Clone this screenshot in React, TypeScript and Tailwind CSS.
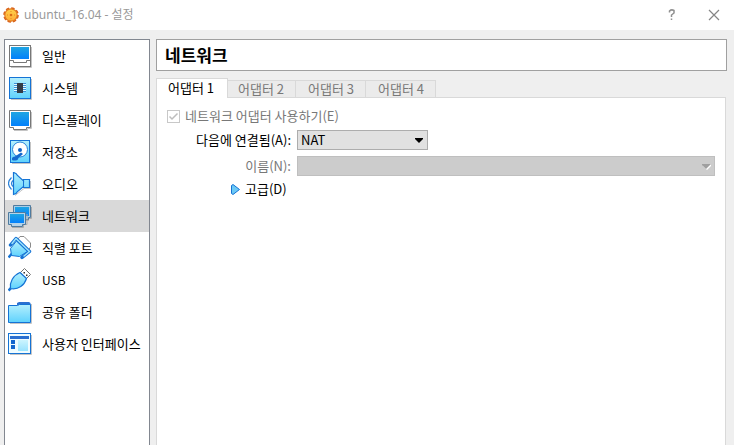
import React from "react";

const iconClass = "h-6 w-6 shrink-0";

function Gradients() {
  return (
    <svg className="absolute h-0 w-0" aria-hidden="true">
      <defs>
        <linearGradient id="screen" x1="0" y1="0" x2="0" y2="1">
          <stop offset="0" stopColor="#1fa5e2" />
          <stop offset="1" stopColor="#0380fb" />
        </linearGradient>
        <linearGradient id="sky" x1="0" y1="0" x2="0" y2="1">
          <stop offset="0" stopColor="#b4effd" />
          <stop offset="1" stopColor="#5fd2fd" />
        </linearGradient>
        <linearGradient id="gear" x1="0" y1="0" x2="0" y2="1">
          <stop offset="0" stopColor="#ffd24a" />
          <stop offset="1" stopColor="#ffac35" />
        </linearGradient>
      </defs>
    </svg>
  );
}

function GeneralIcon() {
  return (
    <svg viewBox="0 0 24 24" className={iconClass} aria-hidden="true">
      <path d="M3 23.5H23.5V3" fill="none" stroke="#c4c4c4" />
      <rect x="1.5" y="1.5" width="21" height="21" fill="#fff" stroke="#777" />
      <rect x="3" y="3" width="18" height="12" fill="url(#screen)" />
      <path d="M1.5 16.5H5.5V18.5H18.5V16.5H22.5" fill="none" stroke="#777" />
    </svg>
  );
}

function SystemIcon() {
  return (
    <svg viewBox="0 0 24 24" className={iconClass} aria-hidden="true">
      <path d="M3 23.5H23.5V3" fill="none" stroke="#c4c4c4" />
      <rect x="1.5" y="1.5" width="21" height="21" fill="url(#sky)" stroke="#1573d5" />
      <path d="M6 7.5H18M6 9.5H18M6 11.5H18M6 13.5H18M6 15.5H18" stroke="#3c8fd8" />
      <path d="M6 8.5H18M6 10.5H18M6 12.5H18M6 14.5H18" stroke="#e5fbff" />
      <rect x="9" y="7" width="6" height="10" fill="#343b46" />
    </svg>
  );
}

function DisplayIcon() {
  return (
    <svg viewBox="0 0 24 24" className={iconClass} aria-hidden="true">
      <path d="M23.5 4V20.5H19.5V22.5H6" fill="none" stroke="#c4c4c4" />
      <path d="M1.5 2.5H22.5V19.5H18.5V21.5H5.5V19.5H1.5Z" fill="#fff" stroke="#777" />
      <rect x="3" y="4" width="18" height="14" fill="url(#screen)" />
    </svg>
  );
}

function StorageIcon() {
  return (
    <svg viewBox="0 0 24 24" className={iconClass} aria-hidden="true">
      <path d="M4 23.5H22.5V2" fill="none" stroke="#c4c4c4" />
      <rect x="2.5" y="0.5" width="19" height="22" fill="url(#sky)" stroke="#1573d5" />
      <circle cx="12" cy="9.5" r="7.5" fill="#fff" stroke="#2a84da" />
      <circle cx="12" cy="10" r="2" fill="#1262c7" />
      <path d="M4 20V18Q4.500 16.500 7 16.500L13 12.500L15 14L10.500 18L9.500 20Q6 21 4 20Z" fill="#1669cf" />
    </svg>
  );
}

function AudioIcon() {
  return (
    <svg viewBox="0 0 24 24" className={iconClass} aria-hidden="true">
      <path d="M7 23.5L16 16.5H22.5V9" fill="none" stroke="#c4c4c4" />
      <path d="M3.5 5.5Q-2.500 11.500 3.500 17.500M5 8.500Q2 11.500 5 14.500" fill="none" stroke="#2c83d9" strokeWidth="1.2" />
      <path d="M5.500 0.500Q8.500 1 9.500 3.500L15.500 9V7.500H21.500V15.500H15.500V14.500L9.500 19.500Q8.500 22 5.500 22.500Z" fill="url(#sky)" stroke="#1573d5" strokeWidth="1.200" />
      <path d="M15.500 7.500V15.500" stroke="#1573d5" />
    </svg>
  );
}

function NetworkIcon() {
  return (
    <svg viewBox="0 0 24 24" className={iconClass} aria-hidden="true">
      <path d="M23.500 3V14.500H20.500V16.500H18" fill="none" stroke="#aaa" />
      <path d="M5.500 1.500H22.500V13.500H20.500V15.500H7.500V13.500H5.500Z" fill="#a9cde6" stroke="#4f7b9f" />
      <rect x="7" y="3" width="14" height="9" fill="url(#screen)" />
      <path d="M19 10V20.500H15.500V23.500H4" fill="none" stroke="#aaa" />
      <path d="M0.500 8.500H17.500V20.500H14.500V22.500H3.500V20.500H0.500Z" fill="#b5d3e8" stroke="#4f7b9f" />
      <rect x="2" y="10" width="14" height="9" fill="url(#screen)" />
    </svg>
  );
}

function SerialIcon() {
  return (
    <svg viewBox="0 0 24 24" className={iconClass} aria-hidden="true">
      <path d="M10 3L12 0.500H16L22.500 7V11L20.500 14Z" fill="#fff" stroke="#8b8b8b" />
      <path d="M4 17.500L0.500 21.500" stroke="#1573d5" strokeWidth="2.500" />
      <path d="M2.500 12.500L8.500 5L19.500 15.500L11.500 20.500L3.500 19.500Z" fill="url(#sky)" stroke="#1573d5" />
      <path d="M2.500 9L8 2.500L21.500 15.500L14 21.500" fill="none" stroke="#1573d5" strokeWidth="3.400" strokeLinecap="round" strokeLinejoin="round" />
      <path d="M4 7.500L8 2.500L21.500 15.500L16 20" fill="none" stroke="#a2e6fd" strokeWidth="1.400" strokeLinecap="round" strokeLinejoin="round" />
    </svg>
  );
}

function UsbIcon() {
  return (
    <svg viewBox="0 0 24 24" className={iconClass} aria-hidden="true">
      <path d="M12.500 4.500L16.500 0.500L22.500 6.500L18.500 10.500Z" fill="#fff" stroke="#727272" />
      <path d="M15.500 4H17V5.500H15.500ZM18 6.500H19.500V8H18Z" fill="#333" />
      <path d="M3 20L0.500 22.500" stroke="#1573d5" strokeWidth="2.500" />
      <path d="M2.500 20.500C1.500 14 5 7.500 12 4.500L18.500 10.500C16.500 17 10.500 22 2.500 20.500Z" fill="url(#sky)" stroke="#1573d5" strokeWidth="1.200" />
    </svg>
  );
}

function FolderIcon() {
  return (
    <svg viewBox="0 0 24 24" className={iconClass} aria-hidden="true">
      <path d="M2 23.500H23.500V4" fill="none" stroke="#c4c4c4" />
      <path d="M9 5V3L11 2H21L22.500 3V5Z" fill="#2b70d0" />
      <path d="M0.500 5.500H9.500L11.500 4.500H22.500V22.500H0.500Z" fill="url(#sky)" stroke="#1573d5" />
    </svg>
  );
}

function InterfaceIcon() {
  return (
    <svg viewBox="0 0 24 24" className={iconClass} aria-hidden="true">
      <path d="M2 22.500H23.500V3" fill="none" stroke="#c4c4c4" />
      <rect x="0.500" y="1.500" width="22" height="20" fill="#effcff" stroke="#1573d5" />
      <rect x="2" y="4" width="19" height="3" fill="#2b70d0" />
      <path d="M3 8H7V12H3ZM3 13H7V17H3Z" fill="#1466ce" />
      <rect x="10" y="8" width="10" height="11" fill="url(#sky)" opacity="0.600" />
    </svg>
  );
}

const sections = [
  { label: "일반", Icon: GeneralIcon },
  { label: "시스템", Icon: SystemIcon },
  { label: "디스플레이", Icon: DisplayIcon },
  { label: "저장소", Icon: StorageIcon },
  { label: "오디오", Icon: AudioIcon },
  { label: "네트워크", Icon: NetworkIcon },
  { label: "직렬 포트", Icon: SerialIcon },
  { label: "USB", Icon: UsbIcon },
  { label: "공유 폴더", Icon: FolderIcon },
  { label: "사용자 인터페이스", Icon: InterfaceIcon },
];

function TitleBar() {
  return (
    <header className="flex h-[30px] items-center bg-white pl-[3px] text-[#999]">
      <svg viewBox="0 0 16 16" className="h-4 w-4" aria-hidden="true">
        <circle cx="8" cy="8" r="6.800" fill="none" stroke="#d9601a" strokeWidth="2" strokeDasharray="3.340 2" />
        <circle cx="8" cy="8" r="6.200" fill="url(#gear)" stroke="#e07a22" strokeWidth="1.200" />
        <circle cx="8" cy="8" r="1.300" fill="#d96c14" />
        <path d="M8 4V5M8 11V12M4 8H5M11 8H12" stroke="#e98822" />
      </svg>
      <h1 className="ml-[5px] flex-1 text-[12px] leading-4">ubuntu_16.04 - 설정</h1>
      <button type="button" aria-label="도움말" className="flex h-full w-[45px] items-center justify-center">
        <svg viewBox="0 0 10 12" className="h-3 w-[10px]" aria-hidden="true">
          <path d="M2.500 3.500V2Q4.500 0 7 1.500V4L4.500 6V8M4.500 9.500V11" fill="none" stroke="#909090" strokeWidth="1.500" />
        </svg>
      </button>
      <button type="button" aria-label="닫기" className="flex h-full w-10 items-center justify-center">
        <svg viewBox="0 0 12 12" className="h-3 w-3" aria-hidden="true">
          <path d="M1 1L11 11M11 1L1 11" stroke="#858585" strokeWidth="1.200" />
        </svg>
      </button>
    </header>
  );
}

function Tabs() {
  return (
    <div role="tablist" className="-mb-px flex items-end text-[13px] leading-4">
      <button type="button" role="tab" aria-selected="true" className="z-10 h-5 w-[72px] border border-b-0 border-[#d9d9d9] bg-white pb-[2px] pl-[11px] text-left text-black">
        어댑터 1
      </button>
      {[2, 3, 4].map((n) => (
        <button key={n} type="button" role="tab" aria-selected="false" className="h-[18px] w-[70px] border border-l-0 border-[#d9d9d9] bg-[#ebebeb] pb-px pl-3 text-left text-[#787878] nth-2:-ml-0.5">
          어댑터 {n}
        </button>
      ))}
    </div>
  );
}

function AdapterPanel() {
  return (
    <div className="mr-px flex-1 border border-b-0 border-[#d9d9d9] bg-white px-[10px] pt-2 text-[13px] leading-5">
      <div className="flex h-5 items-center gap-[5px] text-[#787878]">
        <span className="relative h-[13px] w-[13px]">
          <input id="enable" type="checkbox" defaultChecked disabled className="block h-[13px] w-[13px] appearance-none border border-[#c8c8c8] bg-white" />
          <svg viewBox="0 0 13 13" className="pointer-events-none absolute inset-0" aria-hidden="true">
            <path d="M2.500 6.500L5 9L10.500 3.500" fill="none" stroke="#bdbdbd" strokeWidth="1.500" />
          </svg>
        </span>
        <label htmlFor="enable">네트워크 어댑터 사용하기(E)</label>
      </div>
      <div className="mt-1 grid grid-cols-[124px_minmax(0,1fr)] gap-x-[6px] gap-y-[6px]">
        <label htmlFor="attached" className="text-right text-black">다음에 연결됨(A):</label>
        <div className="relative h-5 w-[131px]">
          <select id="attached" className="block h-5 w-full appearance-none border border-[#adadad] bg-[#e1e1e1] pl-[3px] leading-[18px] text-black">
            <option>NAT</option>
          </select>
          <svg viewBox="0 0 8 5" className="pointer-events-none absolute top-2 right-[5px] h-[5px] w-2" aria-hidden="true">
            <path d="M0 0H8V1L4 5L0 1Z" fill="#000" />
          </svg>
        </div>
        <label htmlFor="name" className="text-right text-[#787878]">이름(N):</label>
        <div className="relative h-5">
          <select id="name" disabled className="block h-5 w-full appearance-none border border-[#bfbfbf] bg-[#ccc] opacity-100" />
          <svg viewBox="0 0 9 6" className="pointer-events-none absolute top-2 right-1 h-[6px] w-[9px]" aria-hidden="true">
            <path d="M1 1H9V2L5 6L1 2Z" fill="#fff" />
            <path d="M0 0H8V1L4 5L0 1Z" fill="#9f9f9f" />
          </svg>
        </div>
      </div>
      <button type="button" className="mt-[3px] ml-16 flex h-5 items-center gap-[5px] text-black">
        <svg viewBox="0 0 9 11" className="h-[11px] w-[9px]" aria-hidden="true">
          <path d="M0.500 1.500L2 0.500L8.500 5.500L2 10.500L0.500 9.500Z" fill="#6cc9f5" stroke="#1573d5" />
        </svg>
        고급(D)
      </button>
    </div>
  );
}

export default function App() {
  return (
    <div className="flex min-h-screen flex-col bg-[#efefef] font-['Noto_Sans','Noto_Sans_CJK_KR',sans-serif]">
      <Gradients />
      <TitleBar />
      <div className="flex flex-1 gap-[6px] pt-[9px] pr-[7px] pl-1">
        <nav className="w-[146px] shrink-0 border border-b-0 border-[#828790] bg-white font-['Noto_Sans_CJK_KR',sans-serif]">
          {sections.map(({ label, Icon }) => (
            <button
              key={label}
              type="button"
              className={`flex h-8 w-full items-center gap-[10px] pl-[3px] text-left leading-5 whitespace-nowrap text-black ${label === "USB" ? "text-[12px]" : "text-[13px]"} ${label === "네트워크" ? "bg-[#d9d9d9]" : ""}`}
            >
              <Icon />
              {label}
            </button>
          ))}
        </nav>
        <main className="flex min-w-0 flex-1 flex-col font-['Noto_Sans_CJK_KR',sans-serif]">
          <h2 className="mb-[7px] h-8 border border-[#a0a0a0] bg-white pl-2 text-[17px] leading-[30px] font-bold text-black">네트워크</h2>
          <Tabs />
          <AdapterPanel />
        </main>
      </div>
    </div>
  );
}
